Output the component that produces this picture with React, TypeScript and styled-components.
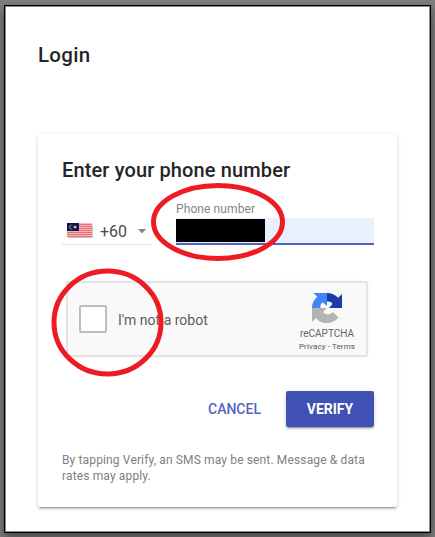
import React from "react";
import styled, { createGlobalStyle } from "styled-components";

const GlobalStyle = createGlobalStyle`
  * { box-sizing: border-box; }
  html, body { margin: 0; padding: 0; }
  body {
    background: #7f7f7f;
    font-family: Roboto, "Liberation Sans", sans-serif;
    color: #262626;
    overflow: hidden;
  }
`;

const Page = styled.main`
  position: relative;
  width: 435px;
  height: 537px;
  padding: 5px 4px 4px;
`;

const Dialog = styled.div`
  width: 427px;
  height: 528px;
  border: 1px solid #000;
  background: #fff;
  box-shadow: inset 0 0 0 1px #8a8a8a, 0 4px 9px rgba(0, 0, 0, 0.5);
  padding: 36px 32px 0 33px;
`;

const Heading = styled.h1`
  margin: 0;
  height: 92px;
  font-size: 20.5px;
  line-height: 27px;
  font-weight: 500;
  letter-spacing: 0.3px;
`;

const Card = styled.section`
  width: 359px;
  height: 373px;
  padding: 24px 23px 0 24px;
  background: #fff;
  border-radius: 2px;
  box-shadow: 0 2px 2px 0 rgba(0, 0, 0, 0.14),
    0 3px 1px -2px rgba(0, 0, 0, 0.2), 0 1px 5px 0 rgba(0, 0, 0, 0.12);
`;

const Title = styled.h2`
  margin: 0;
  height: 43px;
  font-size: 20px;
  line-height: 24px;
  font-weight: 500;
  letter-spacing: 0.13px;
`;

const PhoneRow = styled.div`
  display: flex;
  align-items: flex-end;
  gap: 24px;
  height: 44px;
`;

const CountrySelect = styled.button`
  display: flex;
  align-items: center;
  width: 90px;
  height: 27px;
  padding: 0 5px;
  border: 0;
  border-bottom: 1px solid #e4e4e4;
  background: transparent;
  font: 400 16px/24px Roboto, sans-serif;
  color: #4a4a4a;
`;

const DialCode = styled.span`
  margin-left: 7px;
  padding-top: 2px;
  width: 38px;
  text-align: left;
`;

const Field = styled.label`
  display: flex;
  flex-direction: column;
  width: 198px;
  height: 44px;
`;

const FieldLabel = styled.span`
  height: 17px;
  font-size: 12px;
  line-height: 16px;
  letter-spacing: 0.1px;
  color: #858585;
`;

const FieldInput = styled.div`
  height: 27px;
  padding-top: 1px;
  background: #e8f0fe;
  border-bottom: 2px solid #5062c0;
`;

const Redaction = styled.div`
  width: 89px;
  height: 23px;
  background: #000;
`;

const Captcha = styled.div`
  display: flex;
  align-items: center;
  width: 302px;
  height: 76px;
  margin: 36px 0 0 4px;
  padding-left: 11px;
  border: 2px solid #e3e3e3;
  border-radius: 3px;
  background: #f9f9f9;
  box-shadow: 0 0 3px rgba(0, 0, 0, 0.06);
`;

const CheckBox = styled.span`
  width: 28px;
  height: 28px;
  border: 2px solid #bdbdbd;
  border-radius: 2px;
  background: #fff;
`;

const CaptchaText = styled.span`
  flex: 1;
  margin-left: 11px;
  padding-top: 1px;
  font-size: 14px;
  line-height: 18px;
  color: #5c5c5c;
`;

const Brand = styled.div`
  display: flex;
  flex-direction: column;
  align-items: center;
  width: 78px;
  height: 66px;
  margin-top: 11px;
`;

const BrandName = styled.span`
  margin-top: 3px;
  font-size: 10px;
  line-height: 13px;
  color: #666;
`;

const BrandLinks = styled.span`
  font-size: 8px;
  line-height: 13px;
  letter-spacing: 0.12px;
  color: #555;
`;

const Actions = styled.div`
  display: flex;
  justify-content: flex-end;
  height: 36px;
  margin-top: 34px;
`;

const Button = styled.button<{ $primary?: boolean }>`
  width: ${(p) => (p.$primary ? "88px" : "103px")};
  height: 36px;
  padding: 0;
  border: 0;
  border-radius: 2px;
  font: ${(p) => (p.$primary ? 700 : 500)} 14px/36px Roboto, sans-serif;
  color: ${(p) => (p.$primary ? "#fff" : "#5364be")};
  background: ${(p) => (p.$primary ? "#3f51b5" : "transparent")};
  box-shadow: ${(p) =>
    p.$primary
      ? "0 2px 2px rgba(0,0,0,.14), 0 3px 1px -2px rgba(0,0,0,.2), 0 1px 5px rgba(0,0,0,.12)"
      : "none"};
`;

const Notice = styled.p`
  margin: 25px 0 0;
  font-size: 12px;
  line-height: 16px;
  letter-spacing: 0.14px;
  color: #808080;
`;

const Annotations = styled.svg`
  position: absolute;
  left: 0;
  top: 0;
  pointer-events: none;
`;

function MalaysiaFlag() {
  return (
    <svg width="26" height="16" viewBox="0 0 26 16">
      <rect x="1" y="2" width="25" height="13" fill="#c9c9c9" />
      <rect x="0" y="0" width="25" height="14" fill="#f5b9bb" />
      {[1, 3, 5, 7, 9, 11, 13].map((y) => (
        <rect key={y} x="0" y={y} width="25" height="1" fill="#ee6c70" />
      ))}
      <rect x="0" y="0" width="12" height="8" fill="#0a1467" />
      <path d="M6 2a2.4 2.4 0 1 0 0 4.2A2.2 2.2 0 1 1 6 2z" fill="#e9cf24" />
      <path
        d="M8 2.1l.5 1.2 1.3-.2-.8 1 .8 1-1.3-.2L8 6.1l-.5-1.2-1.3.2.8-1-.8-1 1.3.2z"
        fill="#e9cf24"
      />
    </svg>
  );
}

function CaptchaLogo() {
  return (
    <svg width="32" height="32" viewBox="0 0 64 64">
      <path
        fill="#1c3aa9"
        d="M62 32V4l-7.7 7.7A30 30 0 0 0 32 2v17c6-1 10 2 11 5L36 32z"
      />
      <path
        fill="#4285f4"
        d="M32 2H5l7.5 7.5A30 30 0 0 0 2 32h17c-1-6 1-9 5-11l8 7z"
      />
      <path
        fill="#b4b4b4"
        d="M2 32v28l7.5-7.5A30 30 0 0 0 55 51L44 40c-6 7-16 6-20 0l8-8z"
      />
    </svg>
  );
}

export default function App() {
  return (
    <>
      <GlobalStyle />
      <Page>
        <Dialog>
          <Heading>Login</Heading>
          <Card>
            <Title>Enter your phone number</Title>
            <PhoneRow>
              <CountrySelect>
                <MalaysiaFlag />
                <DialCode>+60</DialCode>
                <svg width="8" height="5" viewBox="0 0 8 5">
                  <path d="M0 0h8L4 4.5z" fill="#858585" />
                </svg>
              </CountrySelect>
              <Field>
                <FieldLabel>Phone number</FieldLabel>
                <FieldInput>
                  <Redaction />
                </FieldInput>
              </Field>
            </PhoneRow>
            <Captcha>
              <CheckBox />
              <CaptchaText>I'm not a robot</CaptchaText>
              <Brand>
                <CaptchaLogo />
                <BrandName>reCAPTCHA</BrandName>
                <BrandLinks>Privacy - Terms</BrandLinks>
              </Brand>
            </Captcha>
            <Actions>
              <Button>CANCEL</Button>
              <Button $primary>VERIFY</Button>
            </Actions>
            <Notice>
              By tapping Verify, an SMS may be sent. Message &amp; data rates may apply.
            </Notice>
          </Card>
        </Dialog>
        <Annotations width="435" height="537" fill="none" stroke="#ed1c24">
          <ellipse cx="218" cy="222" rx="64.5" ry="36.5" strokeWidth="5" />
          <ellipse cx="107.5" cy="322.5" rx="53.5" ry="51.5" strokeWidth="5" />
        </Annotations>
      </Page>
    </>
  );
}
